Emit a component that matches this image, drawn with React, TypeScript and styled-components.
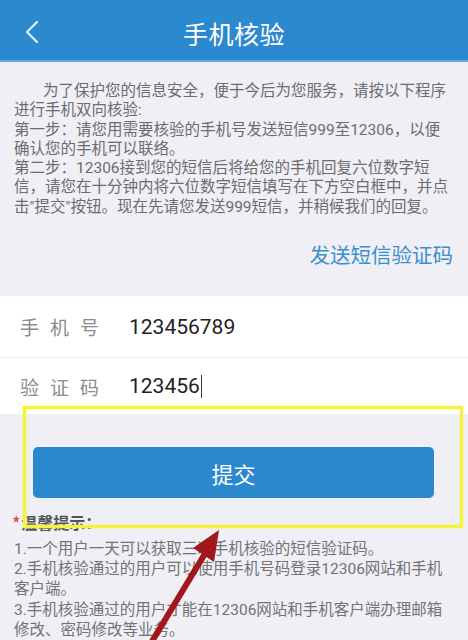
import * as React from "react";
import styled, { createGlobalStyle } from "styled-components";

const GlobalStyle = createGlobalStyle`
  html, body {
    margin: 0;
    padding: 0;
    background: #f0eff5;
  }
  body {
    font-family: Roboto, "Noto Sans CJK SC", sans-serif;
  }
`;

const introLines = [
  "为了保护您的信息安全，便于今后为您服务，请按以下程序",
  "进行手机双向核验:",
  "第一步：请您用需要核验的手机号发送短信999至12306，以便",
  "确认您的手机可以联络。",
  "第二步：12306接到您的短信后将给您的手机回复六位数字短",
  "信，请您在十分钟内将六位数字短信填写在下方空白框中，并点",
  "击\"提交\"按钮。现在先请您发送999短信，并稍候我们的回复。",
];

const tipLines = [
  "1.一个用户一天可以获取三次手机核验的短信验证码。",
  "2.手机核验通过的用户可以使用手机号码登录12306网站和手机",
  "客户端。",
  "3.手机核验通过的用户才能在12306网站和手机客户端办理邮箱",
  "修改、密码修改等业务。",
];

function App() {
  return (
    <Page>
      <GlobalStyle />
      <Header>
        <BackButton>
          <svg width="16" height="26" viewBox="0 0 16 26">
            <path
              d="M13 3 L3 13 L13 23"
              fill="none"
              stroke="#e4f3ff"
              strokeWidth="2.2"
              strokeLinecap="round"
              strokeLinejoin="round"
            />
          </svg>
        </BackButton>
        <Title>手机核验</Title>
      </Header>

      <Intro>
        {introLines.map((line, i) => (
          <IntroLine key={i} $indent={i === 0}>
            {line}
          </IntroLine>
        ))}
      </Intro>

      <SendLink>发送短信验证码</SendLink>

      <Form>
        <Row>
          <Label>手机号</Label>
          <Value>123456789</Value>
        </Row>
        <Row $last>
          <Label>验证码</Label>
          <Value>
            123456
            <Caret />
          </Value>
        </Row>
      </Form>

      <SubmitButton>提交</SubmitButton>

      <TipTitle>
        <Star>*</Star>温馨提示：
      </TipTitle>
      <TipList>
        {tipLines.map((line, i) => (
          <TipLine key={i}>{line}</TipLine>
        ))}
      </TipList>

      <Annotation width="468" height="640" viewBox="0 0 468 640">
        <rect
          x="24.5"
          y="407.5"
          width="437"
          height="119"
          fill="none"
          stroke="#f5f33c"
          strokeWidth="3.5"
        />
        <line
          x1="148"
          y1="648"
          x2="206"
          y2="552"
          stroke="#a3161c"
          strokeWidth="6"
        />
        <polygon points="219,530 193,548 214,562" fill="#a3161c" />
      </Annotation>
    </Page>
  );
}

const Page = styled.div`
  position: relative;
  width: 468px;
  height: 640px;
  overflow: hidden;
  background: #f0eff5;
`;

const Header = styled.div`
  position: relative;
  display: flex;
  align-items: center;
  justify-content: center;
  height: 60px;
  background: #2b89cf;
  border-bottom: 2px solid #5eaee0;
`;

const BackButton = styled.div`
  position: absolute;
  left: 24px;
  top: 19px;
  display: flex;
`;

const Title = styled.div`
  color: #ffffff;
  font-size: 25px;
  margin-top: 6px;
  letter-spacing: 0.5px;
`;

const Intro = styled.div`
  padding: 20px 8px 0 14px;
  color: #6c6c70;
  font-size: 15.5px;
  line-height: 19.3px;
`;

const IntroLine = styled.div<{ $indent?: boolean }>`
  white-space: nowrap;
  padding-left: ${(p) => (p.$indent ? "29px" : "0")};
`;

const SendLink = styled.div`
  margin-top: 25px;
  padding-right: 15px;
  text-align: right;
  color: #3b8fcc;
  font-size: 20.5px;
  line-height: 28px;
`;

const Form = styled.div`
  margin-top: 26px;
  background: #ffffff;
`;

const Row = styled.div<{ $last?: boolean }>`
  display: flex;
  align-items: center;
  height: ${(p) => (p.$last ? "56px" : "61px")};
  padding-left: 20px;
  border-bottom: ${(p) => (p.$last ? "none" : "1px solid #ecebf0")};
`;

const Label = styled.div`
  width: 109px;
  color: #8c8c8e;
  font-size: 19px;
  letter-spacing: 11px;
`;

const Value = styled.div`
  display: flex;
  align-items: center;
  color: #222222;
  font-size: 21px;
`;

const Caret = styled.span`
  display: inline-block;
  width: 1.5px;
  height: 23px;
  margin-left: 1px;
  background: #333333;
`;

const SubmitButton = styled.div`
  display: flex;
  align-items: center;
  justify-content: center;
  margin: 33px 34px 0 33px;
  height: 51px;
  border-radius: 5px;
  background: #2a88cf;
  color: #ffffff;
  font-size: 22px;
`;

const TipTitle = styled.div`
  margin-top: 14px;
  padding-left: 13px;
  color: #555558;
  font-size: 16px;
  font-weight: 700;
  line-height: 20px;
`;

const Star = styled.span`
  color: #d43a3a;
  font-size: 14px;
  margin-right: 2px;
  vertical-align: 2px;
`;

const TipList = styled.div`
  margin-top: 5px;
  padding-left: 14px;
  color: #737376;
  font-size: 15.5px;
  line-height: 20.2px;
`;

const TipLine = styled.div`
  white-space: nowrap;
`;

const Annotation = styled.svg`
  position: absolute;
  left: 0;
  top: 0;
  pointer-events: none;
`;

export default App;
